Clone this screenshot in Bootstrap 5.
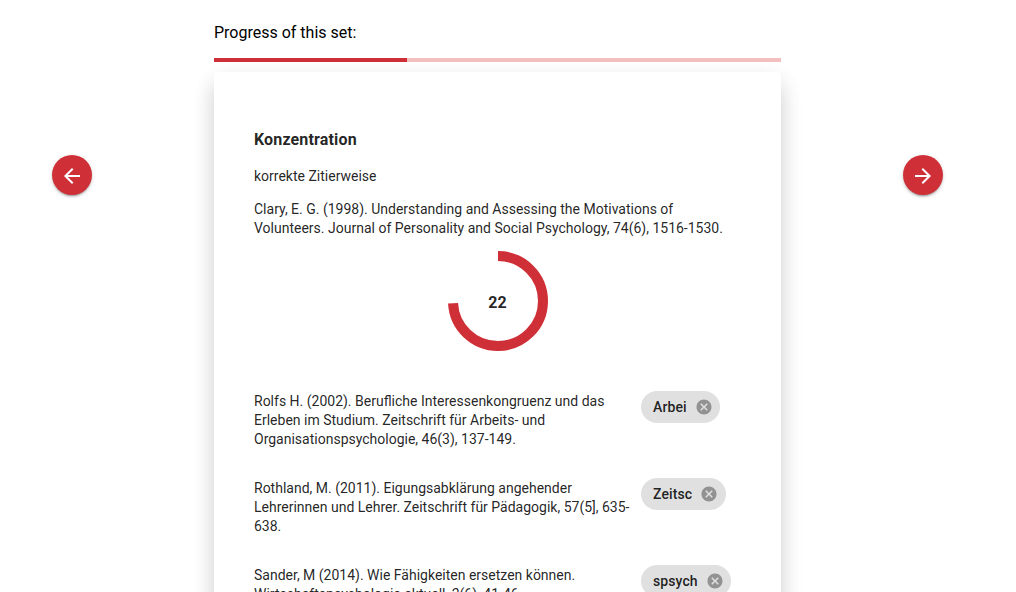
<!DOCTYPE html>
<html lang="de">
<head>
<meta charset="utf-8">
<meta name="viewport" content="width=device-width, initial-scale=1">
<title>Konzentration</title>
<link href="https://cdn.jsdelivr.net/npm/bootstrap@5.3.0/dist/css/bootstrap.min.css" rel="stylesheet">
<style>
  :root { --accent: #cf3038; --ink: rgba(0,0,0,.87); }
  body { font-family: Roboto, "Liberation Sans", sans-serif; font-size: 14px; line-height: 19px; color: var(--ink); background: #fff; }
  .side { width: 214px; padding: 155px 0 0 52px; }
  .side-right { width: 235px; padding-left: 122px; }
  .task { width: 567px; padding-top: 21px; }
  .fab { width: 40px; height: 40px; padding: 2px .8px 0 0; background: var(--accent); color: #fff; border: 0;
    box-shadow: 0 3px 1px -2px rgba(0,0,0,.2), 0 2px 2px 0 rgba(0,0,0,.14), 0 1px 5px 0 rgba(0,0,0,.12); }
  .fab:hover { background: var(--accent); color: #fff; }
  .caption { font-size: 16px; line-height: 24px; color: #000; margin-bottom: 13px; }
  .progress { --bs-progress-height: 4px; --bs-progress-bg: #f4bfbf; --bs-progress-bar-bg: var(--accent); --bs-progress-border-radius: 0; margin-bottom: 10px; }
  .sheet { --bs-card-border-width: 0; --bs-card-border-radius: 4px; --bs-card-color: var(--ink); height: 620px; padding: 58px 40px 0;
    box-shadow: 0 14px 22px rgba(0,0,0,.16), 0 4px 24px rgba(0,0,0,.05); }
  .sheet h1 { font-size: 16px; line-height: 20px; font-weight: 700; letter-spacing: .15px; margin-bottom: 17px; }
  .sheet p { margin-bottom: 14px; }
  .sheet p.target { margin-bottom: 13px; }
  .ring { margin: 0 auto 40px; width: 100px; height: 100px; }
  .ring text { font-size: 16px; font-weight: 700; fill: var(--ink); }
  .source { width: 387px; height: 58px; padding: 1px 8px 0 0; }
  .entries { row-gap: 29px; }
  .chip { height: 32px; padding: 0 7px 0 12px; background: #e0e0e0; font-weight: 500; letter-spacing: .1px; gap: 8px; line-height: 20px; padding-right: 7.5px; }
</style>
</head>
<body class="vh-100 overflow-hidden">
<main class="d-flex align-items-start">
  <div class="side flex-shrink-0">
    <button class="btn fab rounded-circle d-flex align-items-center justify-content-center" aria-label="Previous">
      <svg width="24" height="24" viewBox="0 0 24 24" fill="currentColor"><path d="M20 11H7.83l5.59-5.59L12 4l-8 8 8 8 1.41-1.41L7.83 13H20v-2z"/></svg>
    </button>
  </div>
  <section class="task flex-shrink-0">
    <div class="caption">Progress of this set:</div>
    <div class="progress"><div class="progress-bar" style="width:34%"></div></div>
    <div class="card sheet">
      <h1>Konzentration</h1>
      <p>korrekte Zitierweise</p>
      <p class="target">Clary, E. G. (1998). Understanding and Assessing the Motivations of Volunteers. Journal of Personality and Social Psychology, 74(6), 1516-1530.</p>
      <svg class="ring flex-shrink-0" viewBox="0 0 100 100">
        <circle cx="50" cy="50" r="45" fill="none" stroke="#cf3038" stroke-width="10" pathLength="100" stroke-dasharray="74.2 100" transform="rotate(-90 50 50)"/>
        <text x="49.5" y="57" text-anchor="middle">22</text>
      </svg>
      <div class="entries d-flex flex-column">
        <div class="d-flex align-items-start">
          <div class="source">Rolfs H. (2002). Berufliche Interessenkongruenz und das Erleben im Studium. Zeitschrift für Arbeits- und Organisationspsychologie, 46(3), 137-149.</div>
          <span class="chip rounded-pill d-flex align-items-center">Arbei
            <svg width="18" height="18" viewBox="0 0 24 24" fill="#000" fill-opacity=".35"><path d="M12 2C6.47 2 2 6.47 2 12s4.47 10 10 10 10-4.47 10-10S17.53 2 12 2zm5 13.59L15.59 17 12 13.41 8.41 17 7 15.59 10.59 12 7 8.41 8.41 7 12 10.59 15.59 7 17 8.41 13.41 12 17 15.59z"/></svg>
          </span>
        </div>
        <div class="d-flex align-items-start">
          <div class="source">Rothland, M. (2011). Eigungsabklärung angehender Lehrerinnen und Lehrer. Zeitschrift für Pädagogik, 57(5], 635-638.</div>
          <span class="chip rounded-pill d-flex align-items-center">Zeitsc
            <svg width="18" height="18" viewBox="0 0 24 24" fill="#000" fill-opacity=".35"><path d="M12 2C6.47 2 2 6.47 2 12s4.47 10 10 10 10-4.47 10-10S17.53 2 12 2zm5 13.59L15.59 17 12 13.41 8.41 17 7 15.59 10.59 12 7 8.41 8.41 7 12 10.59 15.59 7 17 8.41 13.41 12 17 15.59z"/></svg>
          </span>
        </div>
        <div class="d-flex align-items-start">
          <div class="source">Sander, M (2014). Wie Fähigkeiten ersetzen können. Wirtschaftspsychologie aktuell, 2(6), 41-46.</div>
          <span class="chip rounded-pill d-flex align-items-center">spsych
            <svg width="18" height="18" viewBox="0 0 24 24" fill="#000" fill-opacity=".35"><path d="M12 2C6.47 2 2 6.47 2 12s4.47 10 10 10 10-4.47 10-10S17.53 2 12 2zm5 13.59L15.59 17 12 13.41 8.41 17 7 15.59 10.59 12 7 8.41 8.41 7 12 10.59 15.59 7 17 8.41 13.41 12 17 15.59z"/></svg>
          </span>
        </div>
      </div>
    </div>
  </section>
  <div class="side side-right flex-shrink-0">
    <button class="btn fab rounded-circle d-flex align-items-center justify-content-center" aria-label="Next">
      <svg width="24" height="24" viewBox="0 0 24 24" fill="currentColor"><path d="M12 4l-1.41 1.41L16.17 11H4v2h12.17l-5.58 5.59L12 20l8-8z"/></svg>
    </button>
  </div>
</main>
<script src="https://cdn.jsdelivr.net/npm/bootstrap@5.3.0/dist/js/bootstrap.bundle.min.js"></script>
</body>
</html>
